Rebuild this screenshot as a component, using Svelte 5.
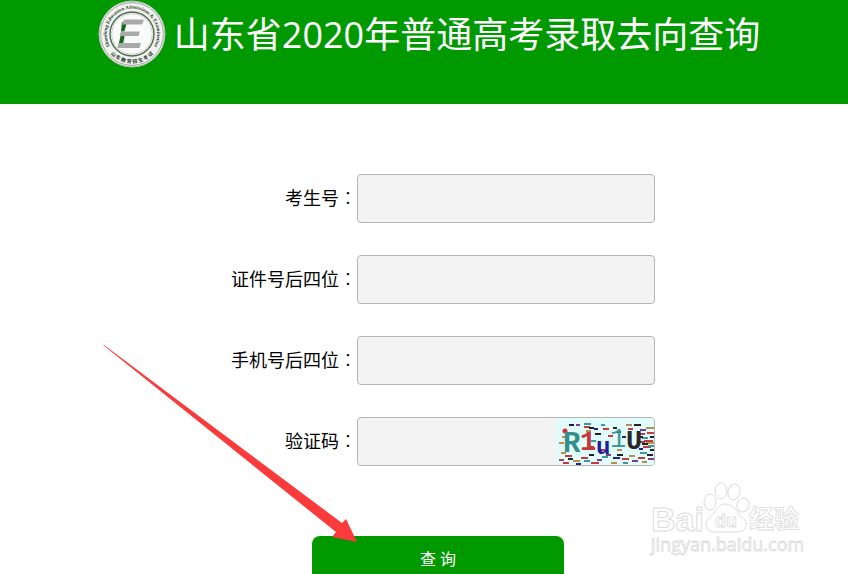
<script lang="ts">
	type Field = { id: string; label: string; captcha?: boolean };
	type Speck = [x: number, y: number, w: number, color: string];

	const fields: Field[] = [
		{ id: 'ksh', label: '考生号' },
		{ id: 'zjh', label: '证件号后四位' },
		{ id: 'sjh', label: '手机号后四位' },
		{ id: 'yzm', label: '验证码', captcha: true }
	];

	let values = $state<Record<string, string>>({ ksh: '', zjh: '', sjh: '', yzm: '' });

	const red = '#c03a3e';
	const teal = '#3f9a94';
	const navy = '#22228e';
	const dark = '#222222';
	const olive = '#b98d4a';
	const purple = '#7a3a9a';

	// noise of the captcha picture, over and under the letters
	const specks: Speck[] = [
		[13, 6, 5, dark], [20, 6, 4, purple], [28, 8, 6, red], [38, 10, 4, navy], [45, 6, 4, teal],
		[47, 10, 6, red], [57, 9, 4, dark], [60, 13, 5, navy], [70, 6, 6, olive], [78, 6, 7, dark],
		[72, 10, 5, red], [84, 11, 6, purple], [90, 9, 8, olive], [82, 15, 7, red], [91, 14, 7, red],
		[94, 18, 4, dark], [86, 19, 6, teal], [6, 18, 4, olive], [30, 12, 5, olive], [3, 24, 5, olive],
		[39, 15, 6, dark], [52, 17, 5, red], [66, 18, 4, navy], [84, 23, 5, red], [90, 24, 8, olive],
		[35, 22, 5, teal], [87, 28, 8, red], [83, 30, 4, navy], [94, 31, 4, dark], [34, 28, 4, red],
		[84, 34, 7, teal], [5, 34, 5, olive], [9, 37, 7, red], [12, 40, 5, dark], [3, 41, 5, red],
		[7, 44, 6, red], [17, 42, 7, olive], [20, 45, 5, navy], [25, 39, 7, red], [28, 42, 6, teal],
		[33, 36, 5, dark], [35, 44, 8, red], [41, 41, 5, purple], [46, 38, 6, teal], [50, 36, 5, purple],
		[55, 44, 6, olive], [57, 39, 7, navy], [61, 36, 6, dark], [66, 40, 7, red], [67, 44, 5, teal],
		[73, 37, 6, olive], [76, 42, 6, purple], [82, 39, 7, red], [86, 43, 5, olive], [91, 36, 6, dark],
		[92, 40, 6, purple], [28, 5, 7, teal], [44, 31, 5, red], [61, 31, 5, olive], [33, 9, 5, dark],
		[88, 22, 9, red], [86, 25, 6, dark], [82, 18, 5, dark], [92, 27, 6, teal], [9, 21, 4, red]
	];
</script>

<div class="page">
	<header>
		<svg class="logo" viewBox="0 0 68 68" aria-hidden="true">
			<defs>
				<path id="ring-top" d="M14.2 49.5 A25.2 25.2 0 1 1 53.8 49.5" />
				<path id="ring-bottom" d="M8 47 A29 29 0 0 0 60 47" />
			</defs>
			<circle cx="34" cy="34" r="33" fill="#f1f3f1" stroke="#b4bdb4" />
			<circle cx="34" cy="34" r="31.4" fill="none" stroke="#8b948b" stroke-width="0.8" />
			<circle cx="34" cy="34" r="22" fill="#fafafa" stroke="#4d6b4d" stroke-width="1.4" />
			<circle cx="34" cy="34" r="20.3" fill="none" stroke="#a8b5a8" stroke-width="0.6" />
			<text class="ring latin">
				<textPath href="#ring-top" startOffset="50%" text-anchor="middle">Shandong Education Admissions &amp; Examination</textPath>
			</text>
			<text class="ring">
				<textPath href="#ring-bottom" startOffset="50%" text-anchor="middle">山 东 教 育 招 生 考 试</textPath>
			</text>
			<path d="M24 22 h5 l-2.5 9 -3.5 1z M23 34 h4 l-2 10 -5 3z" fill="#176b1c" />
			<path d="M26 19.5 h20 l-2 5 h-20z M23 31.5 h19 l-1.5 4.5 h-19z M21 43 h22 l-1.5 5 h-22z" fill="#a9abaa" />
		</svg>
		<h1>山东省2020年普通高考录取去向查询</h1>
	</header>

	<form onsubmit={(e) => e.preventDefault()}>
		{#each fields as field (field.id)}
			<div class="row">
				<label for={field.id}>{field.label}<span class="colon" lang="zh-TW">：</span></label>
				<div class="control">
					<input id={field.id} type="text" autocomplete="off" bind:value={values[field.id]} />
					{#if field.captcha}
						<svg class="captcha" viewBox="0 0 98 47" role="img" aria-label="验证码">
							<rect width="98" height="47" fill="#e2fbfb" />
							{#each specks as [x, y, w, color]}
								<rect {x} {y} width={w} height="2" fill={color} />
							{/each}
							<circle cx="9" cy="13" r="2.5" fill="#d42a3a" />
							<g class="code">
								<text x="7" y="34" fill="#348e8c" font-size="29">R</text>
								<text x="24" y="32" fill="#c23838" font-size="27">1</text>
								<text x="40" y="36" fill="#20209a" font-size="24">u</text>
								<text class="thin" x="54" y="29" fill="#3b9a98" font-size="27">1</text>
								<text x="70" y="31" fill="#2a2630" font-size="27">U</text>
							</g>
						</svg>
					{/if}
				</div>
			</div>
		{/each}
		<button type="submit">查 询</button>

		<svg class="arrow" viewBox="0 0 256 200" aria-hidden="true">
			<path d="M0 0 L1 0 L239 178 L243 174 L254 197 L229 192 L233 187 Z" fill="#fb3b3b" />
		</svg>
	</form>

	<svg class="watermark" viewBox="0 0 160 80" role="img" aria-label="Baidu 经验">
		<g fill="#fff" stroke="#dcdcdc">
			<text class="brand" x="3" y="51">Bai</text>
			<ellipse cx="62" cy="22" rx="6" ry="8" />
			<ellipse cx="73" cy="11" rx="6" ry="8" />
			<ellipse cx="86" cy="12" rx="6" ry="8" transform="rotate(12 86 12)" />
			<ellipse cx="95" cy="25" rx="6" ry="7" transform="rotate(20 95 25)" />
			<path d="M77 24 C83 24 87 28 91 34 C96 39 99 41 98 46 C97 52 91 52 87 52 H68 C63 52 58 50 58 44 C58 39 63 37 66 33 C69 28 72 24 77 24Z" />
			<text class="du" x="67" y="47">du</text>
			<text class="cjk" x="101" y="48">经验</text>
			<text class="domain" x="3" y="71">jingyan.baidu.com</text>
		</g>
	</svg>
</div>

<style>
	:global(body) {
		margin: 0;
		background: #fff;
	}

	.page {
		position: relative;
		height: 100vh;
		overflow: hidden;
		font-family: 'Open Sans', 'Noto Sans CJK SC', sans-serif;
		color: #000;
	}

	header {
		display: flex;
		justify-content: center;
		gap: 8px;
		height: 104px;
		padding-left: 10px;
		box-sizing: border-box;
		background: #090;
	}

	.logo {
		flex: none;
		width: 68px;
		height: 68px;
	}

	.ring {
		font: bold 5px 'Noto Sans CJK SC', sans-serif;
		fill: #2b3b2b;
	}

	.latin {
		font: bold 5px 'Liberation Serif', serif;
	}

	h1 {
		margin: 0;
		font-size: 36px;
		font-weight: 400;
		line-height: 70px;
		white-space: nowrap;
		color: #fff;
	}

	form {
		position: relative;
		display: flex;
		flex-direction: column;
		gap: 32px;
		width: 462px;
		margin: 0 auto;
		padding-top: 70px;
	}

	.row {
		display: flex;
		align-items: center;
	}

	label {
		flex: 1;
		padding-bottom: 4px;
		text-align: right;
		font-size: 18px;
		line-height: 24px;
		font-family: 'Noto Sans CJK SC', sans-serif;
	}

	.colon {
		font-family: 'Noto Sans CJK TC', sans-serif;
		font-weight: 300;
	}

	.control {
		position: relative;
		width: 298px;
	}

	input {
		display: block;
		width: 100%;
		height: 49px;
		padding: 0 12px;
		box-sizing: border-box;
		border: 1px solid #b5b5b5;
		border-radius: 4px;
		background: #f3f3f3;
		font: 18px 'Open Sans', 'Noto Sans CJK SC', sans-serif;
	}

	.captcha {
		position: absolute;
		top: 1px;
		right: 1px;
		width: 98px;
		height: 47px;
		border-radius: 0 3px 3px 0;
	}

	.code {
		font-family: 'Liberation Mono', monospace;
		font-weight: bold;
	}

	.thin {
		font-weight: normal;
	}

	button {
		align-self: center;
		width: 252px;
		height: 46px;
		margin: 38px 0 0 28px;
		padding: 0 0 2px;
		border: 0;
		border-radius: 8px;
		background: #090;
		color: #fff;
		font: 16px 'Open Sans', 'Noto Sans CJK SC', sans-serif;
		cursor: pointer;
	}

	.arrow {
		position: absolute;
		top: 241px;
		left: -90px;
		width: 256px;
		height: 200px;
		pointer-events: none;
	}

	.watermark {
		position: absolute;
		right: 40px;
		bottom: 14px;
		width: 160px;
		height: 80px;
		pointer-events: none;
	}

	.brand {
		font: bold 34px 'Liberation Sans', sans-serif;
	}

	.du {
		font: bold 18px 'Liberation Sans', sans-serif;
		stroke-width: 0.8;
	}

	.cjk {
		font: bold 25px 'Noto Sans CJK SC', sans-serif;
		stroke-width: 0.8;
	}

	.domain {
		font: 18px 'Open Sans', sans-serif;
		stroke-width: 0.8;
	}
</style>
